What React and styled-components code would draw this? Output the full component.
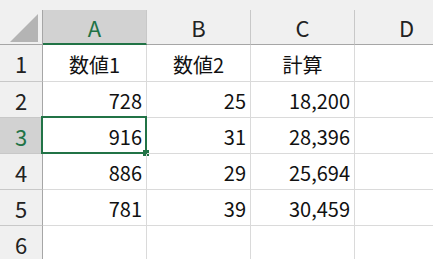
import React from "react";
import styled, { createGlobalStyle } from "styled-components";

const GlobalStyle = createGlobalStyle`
  html, body { margin: 0; padding: 0; background: #f0f0f0; overflow: hidden; }
  body { font-family: "Noto Sans CJK JP", "Noto Sans", sans-serif; }
`;

const GREEN = "#217346";

const Sheet = styled.div`
  width: 433px;
  height: 259px;
  padding-top: 10px;
  box-sizing: border-box;
  background: #f0f0f0;
  overflow: hidden;
`;

const Grid = styled.div`
  display: grid;
  grid-template-columns: 43px 104px 104px 104px 104px;
  grid-template-rows: 35px 37px 36px 36px 36px 36px 36px;
  background: #ffffff;
`;

const Corner = styled.div`
  position: relative;
  background: #f0f0f0;
  border-right: 1px solid #a6a6a6;
  border-bottom: 1px solid #a6a6a6;
  box-sizing: border-box;
  display: flex;
  align-items: flex-end;
  justify-content: flex-end;
  padding: 0 3px 2px 0;
`;

const ColHead = styled.div`
  box-sizing: border-box;
  background: ${(p) => (p.$active ? "#d2d2d2" : "#f0f0f0")};
  color: ${(p) => (p.$active ? GREEN : "#222")};
  border-right: 1px solid #c8c8c8;
  border-bottom: ${(p) => (p.$active ? `2px solid ${GREEN}` : "1px solid #a6a6a6")};
  display: flex;
  align-items: center;
  justify-content: center;
  font-size: 22px;
  padding-top: ${(p) => (p.$active ? "1px" : "0")};
`;

const RowHead = styled.div`
  box-sizing: border-box;
  background: ${(p) => (p.$active ? "#d2d2d2" : "#f0f0f0")};
  color: ${(p) => (p.$active ? GREEN : "#222")};
  border-right: 1px solid #a6a6a6;
  border-bottom: 1px solid #c8c8c8;
  display: flex;
  align-items: center;
  justify-content: center;
  font-size: 22px;
`;

const Cell = styled.div`
  position: relative;
  box-sizing: border-box;
  border-right: 1px solid #dadada;
  border-bottom: 1px solid #dadada;
  display: flex;
  align-items: center;
  justify-content: ${(p) => (p.$align === "center" ? "center" : "flex-end")};
  padding: 2px 4px 0 4px;
  font-size: 20px;
  color: #111;
  white-space: nowrap;
`;

const Selection = styled.div`
  position: absolute;
  left: -2px;
  top: -2px;
  right: -1px;
  bottom: -1px;
  border: 2px solid ${GREEN};
  box-sizing: border-box;
  pointer-events: none;
`;

const FillHandle = styled.div`
  position: absolute;
  left: 100px;
  top: 32px;
  width: 6px;
  height: 6px;
  background: ${GREEN};
`;

const columns = ["A", "B", "C", "D"];
const rows = [
  [{ v: "数値1", c: true }, { v: "数値2", c: true }, { v: "計算", c: true }, { v: "" }],
  [{ v: "728" }, { v: "25" }, { v: "18,200" }, { v: "" }],
  [{ v: "916" }, { v: "31" }, { v: "28,396" }, { v: "" }],
  [{ v: "886" }, { v: "29" }, { v: "25,694" }, { v: "" }],
  [{ v: "781" }, { v: "39" }, { v: "30,459" }, { v: "" }],
  [{ v: "" }, { v: "" }, { v: "" }, { v: "" }],
];

export default function App() {
  return (
    <>
      <GlobalStyle />
      <Sheet>
        <Grid>
          <Corner>
            <svg width="29" height="28" viewBox="0 0 29 28">
              <polygon points="28,0 28,28 0,28" fill="#b4b4b4" />
            </svg>
          </Corner>
          {columns.map((c) => (
            <ColHead key={c} $active={c === "A"}>
              {c}
            </ColHead>
          ))}
          {rows.map((r, i) => (
            <React.Fragment key={i}>
              <RowHead $active={i === 2}>{i + 1}</RowHead>
              {r.map((cell, j) => (
                <Cell key={j} $align={cell.c ? "center" : "right"}>
                  {cell.v}
                  {i === 2 && j === 0 && (
                    <Selection>
                      <FillHandle />
                    </Selection>
                  )}
                </Cell>
              ))}
            </React.Fragment>
          ))}
        </Grid>
      </Sheet>
    </>
  );
}
